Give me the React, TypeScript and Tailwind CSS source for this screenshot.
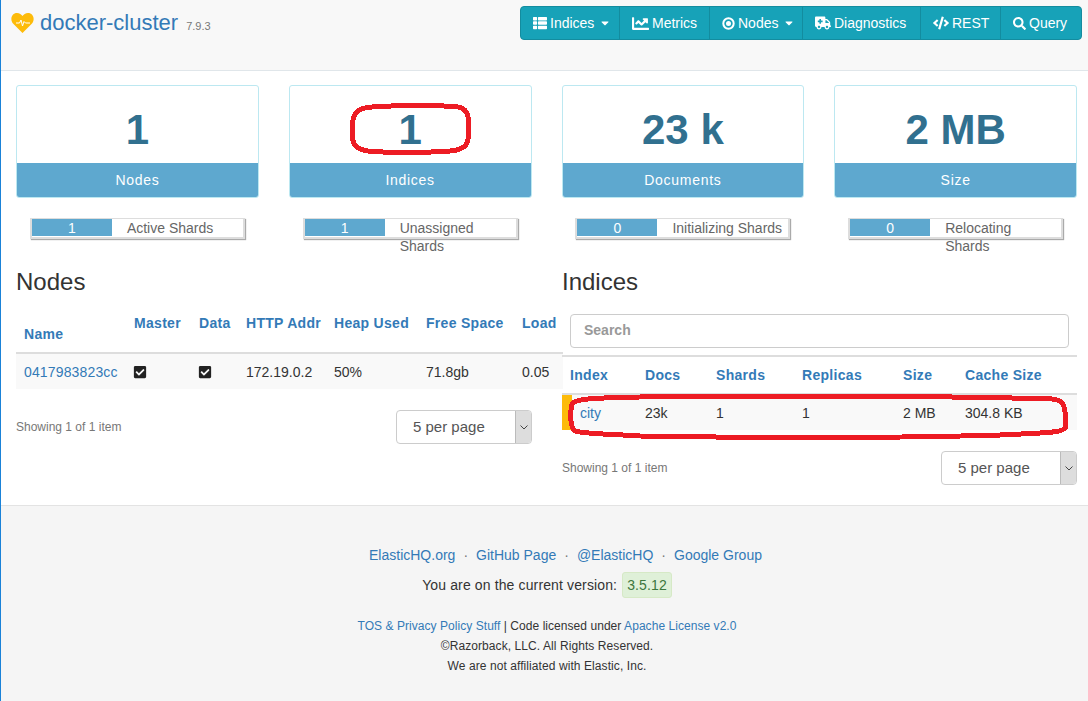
import { FaAmbulance, FaCaretDown, FaChartLine, FaCheckSquare, FaCode, FaSearch, FaThList } from "react-icons/fa";

const stats = [
  { value: "1", label: "Nodes", count: "1", shards: "Active Shards" },
  { value: "1", label: "Indices", count: "1", shards: "Unassigned\nShards" },
  { value: "23 k", label: "Documents", count: "0", shards: "Initializing Shards" },
  { value: "2 MB", label: "Size", count: "0", shards: "Relocating\nShards" },
];

const DotCircle = () => (
  <svg width="13" height="13" viewBox="0 0 13 13" fill="none">
    <circle cx="6.5" cy="6.5" r="5.2" stroke="white" strokeWidth="2" />
    <circle cx="6.5" cy="6.5" r="2.5" fill="white" />
  </svg>
);

const navItems = [
  { icon: <FaThList size={14} />, label: "Indices", caret: true, width: "w-[99px]" },
  { icon: <FaChartLine size={17} />, label: "Metrics", width: "w-[90px]" },
  { icon: <DotCircle />, label: "Nodes", caret: true, width: "w-[93px]" },
  { icon: <FaAmbulance size={16} />, label: "Diagnostics", width: "w-[118px]" },
  { icon: <FaCode size={16} />, label: "REST", width: "w-[80px]" },
  { icon: <FaSearch size={13} />, label: "Query", width: "flex-1" },
];

const PerPage = () => (
  <div className="flex h-[34px] w-[136px] overflow-hidden rounded border border-[#ccc] bg-white text-[15px] text-[#555]">
    <div className="flex-1 pl-4 leading-[32px]">5 per page</div>
    <div className="flex w-[16px] items-center justify-center border-l border-[#bbb] bg-[#ddd]">
      <svg width="8" height="5" viewBox="0 0 8 5" fill="none" stroke="#444" strokeWidth="1">
        <path d="M0.5 0.5 L4 4 L7.5 0.5" />
      </svg>
    </div>
  </div>
);

const App = () => {
  return (
    <div className="relative min-h-[701px] w-[1088px] border-l border-[#1a82d8] bg-white font-['Liberation_Sans',sans-serif] text-[14px] text-[#333]">
      {/* Navbar */}
      <header className="flex h-[71px] items-start justify-between border-b border-[#e0e6ea] bg-[#f8f8f8] pr-[6px]">
        <div className="flex items-center pl-[10px] pt-[9px]">
          <svg width="23" height="20" viewBox="0 0 23 20">
            <path fill="#fdbb0a" d="M11.5 20 L2 10.5 C-1.5 6 1 0 6 0 C8.5 0 10.5 1.5 11.5 3 C12.5 1.5 14.5 0 17 0 C22 0 24.5 6 21 10.5 Z" />
            <path fill="none" stroke="white" strokeWidth="1" d="M5 10 L8.5 10 L10 7 L11.5 13 L13 8.5 L14.5 10 L19 10" />
          </svg>
          <span className="ml-[6px] text-[22px] leading-[28px] text-[#337ab7]">docker-cluster</span>
          <span className="ml-[8px] mt-[6px] text-[11px] text-[#777]">7.9.3</span>
        </div>
        <nav className="mt-[6px] flex h-[34px] w-[562px] rounded border border-[#138c9f] bg-[#17a2b8] text-white">
          {navItems.map((item) => (
            <div key={item.label} className={`flex items-center gap-[3px] border-r border-[#138c9f] pl-[12px] last:border-r-0 ${item.width}`}>
              {item.icon}
              <span>{item.label}</span>
              {item.caret && <FaCaretDown size={12} className="ml-[2px]" />}
            </div>
          ))}
        </nav>
      </header>

      {/* Stat cards */}
      <section className="grid grid-cols-4 gap-x-[30px] pl-[15px] pr-[11px] pt-[14px]">
        {stats.map((s) => (
          <div key={s.label}>
            <div className="overflow-hidden rounded-[3px] border border-[#bce8f1]">
              <div className="h-[77px] text-center text-[42px] font-bold leading-[88px] text-[#31708f]">{s.value}</div>
              <div className="h-[34px] bg-[#5ea8cf] text-center leading-[34px] tracking-[0.7px] text-white">{s.label}</div>
            </div>
            <div className="mx-auto mt-[20px] flex h-[21px] w-[215px] items-start border-2 border-t border-[#ddd] bg-white shadow-[1px_1px_1px_#aaa]">
              <div className="h-[17px] w-[80px] shrink-0 bg-[#5ea8cf] text-center leading-[19px] text-white">{s.count}</div>
              <div className="whitespace-pre-line pl-[15px] leading-[18px] text-[#666]">{s.shards}</div>
            </div>
          </div>
        ))}
      </section>

      {/* Tables */}
      <section className="flex h-[266px] pl-[15px] pt-[29px]">
        <div className="w-[546px]">
          <h2 className="mb-[12px] h-[28px] text-[24px] leading-[28px]">Nodes</h2>
          <table className="w-[547px] table-fixed border-collapse text-left">
            <thead className="font-bold tracking-[0.3px] text-[#337ab7]">
              <tr className="h-[45px] border-b-2 border-[#ddd]">
                <th className="w-[110px] pl-[8px] pt-[8px]">Name</th>
                <th className="w-[65px] pb-[14px] pl-[8px]">Master</th>
                <th className="w-[47px] pb-[14px] pl-[8px]">Data</th>
                <th className="w-[88px] pb-[14px] pl-[8px]">HTTP Addr</th>
                <th className="w-[92px] pb-[14px] pl-[8px]">Heap Used</th>
                <th className="w-[96px] pb-[14px] pl-[8px]">Free Space</th>
                <th className="pb-[14px] pl-[8px]">Load</th>
              </tr>
            </thead>
            <tbody>
              <tr className="h-[36px] bg-[#f9f9f9]">
                <td className="pl-[8px] pt-[2px] tracking-[0.15px] text-[#337ab7]">0417983823cc</td>
                <td className="pl-[7px]"><FaCheckSquare size={14} className="text-[#222]" /></td>
                <td className="pl-[7px]"><FaCheckSquare size={14} className="text-[#222]" /></td>
                <td className="pl-[8px] pt-[2px]">172.19.0.2</td>
                <td className="pl-[8px] pt-[2px]">50%</td>
                <td className="pl-[8px] pt-[2px]">71.8gb</td>
                <td className="pl-[8px] pt-[2px]">0.05</td>
              </tr>
            </tbody>
          </table>
          <div className="mt-[21px] flex items-center justify-between pr-[30px]">
            <span className="text-[12px] text-[#777]">Showing 1 of 1 item</span>
            <PerPage />
          </div>
        </div>

        <div className="w-[515px]">
          <h2 className="h-[28px] text-[24px] leading-[28px]">Indices</h2>
          <div className="ml-[8px] mt-[18px] h-[34px] w-[499px] rounded border border-[#ccc] bg-white pl-[13px] font-bold leading-[30px] text-[#999]">Search</div>
          <table className="mt-[7px] w-[515px] table-fixed border-collapse border-t-2 border-[#ddd] text-left">
            <thead className="font-bold tracking-[0.3px] text-[#337ab7]">
              <tr className="h-[38px] border-b-2 border-[#ddd]">
                <th className="w-[83px] pl-[8px]">Index</th>
                <th className="w-[71px]">Docs</th>
                <th className="w-[86px]">Shards</th>
                <th className="w-[101px]">Replicas</th>
                <th className="w-[62px]">Size</th>
                <th>Cache Size</th>
              </tr>
            </thead>
            <tbody>
              <tr className="h-[36px] bg-[#f9f9f9]">
                <td className="pl-[18px] pt-[2px] text-[#337ab7] shadow-[inset_10px_0_0_#fdbb0a]">city</td>
                <td className="pt-[2px]">23k</td>
                <td className="pt-[2px]">1</td>
                <td className="pt-[2px]">1</td>
                <td className="pt-[2px]">2 MB</td>
                <td className="pt-[2px]">304.8 KB</td>
              </tr>
            </tbody>
          </table>
          <div className="mt-[21px] flex items-center justify-between">
            <span className="text-[12px] text-[#777]">Showing 1 of 1 item</span>
            <PerPage />
          </div>
        </div>
      </section>

      {/* Footer */}
      <footer className="h-[196px] border-t border-[#e3e3e3] bg-[#f5f5f5] pl-[5px] pt-[39px] text-center">
        <div className="flex items-center justify-center gap-[8px] pl-[37px] text-[#337ab7]">
          <span>ElasticHQ.org</span><span className="text-[#777]">·</span>
          <span>GitHub Page</span><span className="text-[#777]">·</span>
          <span>@ElasticHQ</span><span className="text-[#777]">·</span>
          <span>Google Group</span>
        </div>
        <div className="mt-[6px] flex items-center justify-center gap-[5px] tracking-[0.13px]">
          <span>You are on the current version:</span>
          <span className="rounded-[3px] border border-[#d6e9c6] bg-[#dff0d8] px-[4px] leading-[24px] text-[#3c763d]">3.5.12</span>
        </div>
        <div className="mt-[18px] text-[12px] leading-[20px]">
          <div className="tracking-[0.05px]"><span className="text-[#337ab7]">TOS &amp; Privacy Policy Stuff</span> | Code licensed under <span className="text-[#337ab7]">Apache License v2.0</span></div>
          <div className="tracking-[0.08px]">©Razorback, LLC. All Rights Reserved.</div>
          <div className="tracking-[0.08px]">We are not affiliated with Elastic, Inc.</div>
        </div>
      </footer>

      {/* Hand-drawn red annotations */}
      <svg className="pointer-events-none absolute left-[-1px] top-0" width="1088" height="701" fill="none" stroke="#ed1c24" strokeWidth="5" shapeRendering="crispEdges">
        <path d="M372 107 C400 105 440 105 458 107 C466 108 469 114 469 128 C469 144 466 150 450 151 C420 153 390 153 368 151 C354 149 352 144 352 130 C352 114 356 108 372 107 Z" />
        <path d="M640 397 C760 396 950 396 1052 399 C1060 400 1064 402 1065 412 L1065 428 C1062 433 1040 433 1000 435 C900 438 760 438 640 436 C610 434 585 434 575 431 C570 428 570 412 572 404 C575 398 600 398 640 397 Z" />
      </svg>
    </div>
  );
};

export default App;
